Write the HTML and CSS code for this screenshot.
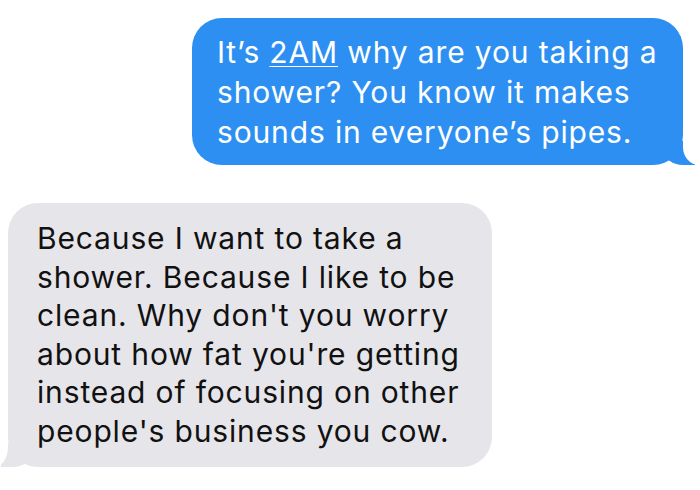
FILE: index.html
```html
<!DOCTYPE html>
<html lang="en">
<head>
  <meta charset="UTF-8">
  <title>Messages</title>
  <link rel="stylesheet" href="styles.css">
</head>
<body>
  <main class="thread">
    <div class="bubble sent">
      It’s <span class="link">2AM</span> why are you taking a<br>
      shower? You know it makes<br>
      sounds in everyone’s pipes.
    </div>
    <div class="bubble received">
      Because I want to take a<br>
      shower. Because I like to be<br>
      clean. Why don't you worry<br>
      about how fat you're getting<br>
      instead of focusing on other<br>
      people's business you cow.
    </div>
  </main>
</body>
</html>
```

FILE: styles.css
```css
html, body {
  margin: 0;
  padding: 0;
  background: #fff;
}

body {
  width: 700px;
  height: 490px;
  overflow: hidden;
  font-family: Inter, "Liberation Sans", Arial, sans-serif;
}

.thread {
  display: flex;
  flex-direction: column;
  padding-top: 18px;
}

.bubble {
  position: relative;
  font-size: 30px;
  letter-spacing: 0.85px;
  border-radius: 30px;
  box-sizing: border-box;
}

.sent {
  align-self: flex-start;
  margin-left: 192px;
  width: 491px;
  height: 147px;
  padding: 14px 0 0 25px;
  line-height: 40px;
  background: #2d8ff2;
  color: #fff;
}

.link {
  text-decoration: underline;
  text-decoration-thickness: 1px;
  text-underline-offset: 3px;
}

.received {
  margin-top: 38px;
  margin-left: 8px;
  width: 484px;
  height: 264px;
  padding: 16px 0 0 29px;
  line-height: 38.6px;
  background: #e6e5ea;
  color: #111;
}

/* tails */
.bubble::before,
.bubble::after {
  content: "";
  position: absolute;
  bottom: 0;
  height: 24px;
}

.sent::before {
  right: -12px;
  width: 32px;
  background: #2d8ff2;
  border-bottom-left-radius: 20px 16px;
}

.sent::after {
  right: -40px;
  width: 40px;
  background: #fff;
  border-bottom-left-radius: 16px 18px;
}

.received::before {
  left: -7px;
  width: 32px;
  background: #e6e5ea;
  border-bottom-right-radius: 20px 16px;
}

.received::after {
  left: -40px;
  width: 40px;
  background: #fff;
  border-bottom-right-radius: 14px 20px;
}
```
